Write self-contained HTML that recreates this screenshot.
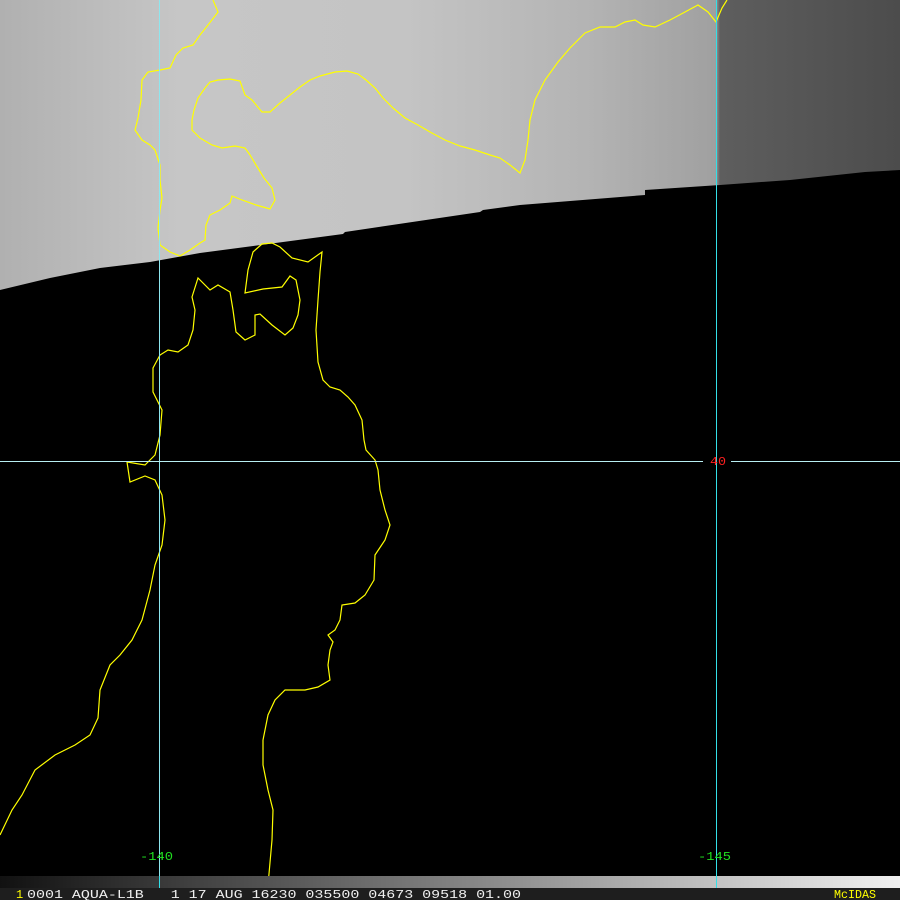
<!DOCTYPE html>
<html><head><meta charset="utf-8"><style>
html,body{margin:0;padding:0;background:#000;width:900px;height:900px;overflow:hidden}
svg{display:block}
text{font-family:"Liberation Mono",monospace}
</style></head><body>
<svg width="900" height="900" viewBox="0 0 900 900" xmlns="http://www.w3.org/2000/svg">
<defs>
<linearGradient id="cloud" x1="0" y1="0" x2="1" y2="0">
<stop offset="0" stop-color="#b0b0b0"/>
<stop offset="0.2" stop-color="#c6c6c6"/>
<stop offset="0.45" stop-color="#c4c4c4"/>
<stop offset="0.65" stop-color="#b4b4b4"/>
<stop offset="0.795" stop-color="#a0a0a0"/>
<stop offset="0.8" stop-color="#5e5e5e"/>
<stop offset="1" stop-color="#4c4c4c"/>
</linearGradient>
<linearGradient id="bar" x1="0" y1="0" x2="1" y2="0">
<stop offset="0" stop-color="#111"/>
<stop offset="1" stop-color="#f0f0f0"/>
</linearGradient>
</defs>
<rect width="900" height="900" fill="#000"/>
<polygon fill="url(#cloud)" points="0,0 900,0 900,170 865,172 790,180 720,185 645,190 645,195 520,205 483,210 480,212 345,232 343,234 200,253 150,262 100,268 50,278 0,290"/>
<g fill="none" stroke="#ffff00" stroke-width="1.2">
<polyline points="0,835 12,810 22,795 35,770 55,755 75,745 90,735 98,718 100,690 110,665 120,655 132,640 142,620 150,590 155,565 162,545 165,520 162,495 155,480 145,476 130,482 127,462 145,465 155,455 160,435 162,410 153,392 153,368 160,355 168,350 178,352 188,345 193,330 195,310 192,297 198,278 210,290 218,285 230,292 233,310 236,332 245,340 255,335 255,315 260,314 272,325 285,335 293,328 298,315 300,300 296,280 290,276 282,287 263,289 245,293 248,270 253,252 262,244 272,243 280,247 292,258 308,262 322,252 320,272 318,300 316,330 318,362 323,380 330,387 340,390 348,397 355,405 362,420 364,440 366,450 375,460 378,470 380,490 385,510 390,525 385,540 375,555 374,580 365,595 355,603 342,605 340,620 335,630 328,635 333,642 330,650 328,665 330,680 318,687 305,690 285,690 275,700 268,715 263,740 263,765 268,790 273,810 272,840 268,885"/>
<polyline points="213,0 218,12 208,25 200,35 193,45 183,48 176,55 170,68 160,70 148,72 142,80 141,100 138,118 135,130 142,140 150,145 155,150 160,165 160,180 162,198 160,210 158,228 160,245 170,252 180,256 190,250 200,243 205,240 206,225 210,215 220,210 230,203 232,196 242,200 256,205 270,209 275,200 272,188 264,178 256,165 250,155 245,148 235,146 222,148 212,145 200,138 192,130 192,120 194,110 198,98 205,88 210,82 218,80 230,79 240,81 245,95 252,100 262,112 270,112 280,103 290,95 300,87 310,80 320,76 335,72 347,71 358,74 366,80 375,88 383,98 393,108 405,118 418,125 430,132 445,140 460,146 475,150 490,155 500,158 510,165 520,173 525,160 528,140 530,120 535,100 545,80 558,62 570,48 585,33 600,27 615,27 625,22 635,20 643,25 655,27 670,20 685,12 698,5 708,12 716,22 722,8 727,0"/>
</g>
<g fill="#33e0e8" shape-rendering="crispEdges">
<rect x="159" y="0" width="1" height="888" fill="#8ee6ee"/>
<rect x="716" y="0" width="1" height="888"/>
<rect x="0" y="461" width="703" height="1" fill="#b8eef2"/>
<rect x="731" y="461" width="169" height="1" fill="#b8eef2"/>
</g>
<text x="710" y="465" fill="#ff2020" font-size="12" textLength="16" lengthAdjust="spacingAndGlyphs">40</text>
<text x="140" y="860" fill="#20e020" font-size="12" textLength="33" lengthAdjust="spacingAndGlyphs">-140</text>
<text x="698" y="860" fill="#20e020" font-size="12" textLength="33" lengthAdjust="spacingAndGlyphs">-145</text>
<rect x="0" y="876" width="900" height="12" fill="url(#bar)"/>
<rect x="159" y="876" width="1" height="12" fill="#33e0e8"/>
<rect x="716" y="876" width="1" height="12" fill="#33e0e8"/>
<rect x="0" y="888" width="900" height="12" fill="#1e1e1e"/>
<text x="16" y="898" fill="#ffff00" font-size="12">1</text>
<text x="27" y="898" fill="#f0f0f0" font-size="12" xml:space="preserve" textLength="494" lengthAdjust="spacingAndGlyphs">0001 AQUA-L1B   1 17 AUG 16230 035500 04673 09518 01.00</text>
<text x="834" y="898" fill="#ffff00" font-size="12" textLength="42" lengthAdjust="spacingAndGlyphs">McIDAS</text>
</svg>
</body></html>
